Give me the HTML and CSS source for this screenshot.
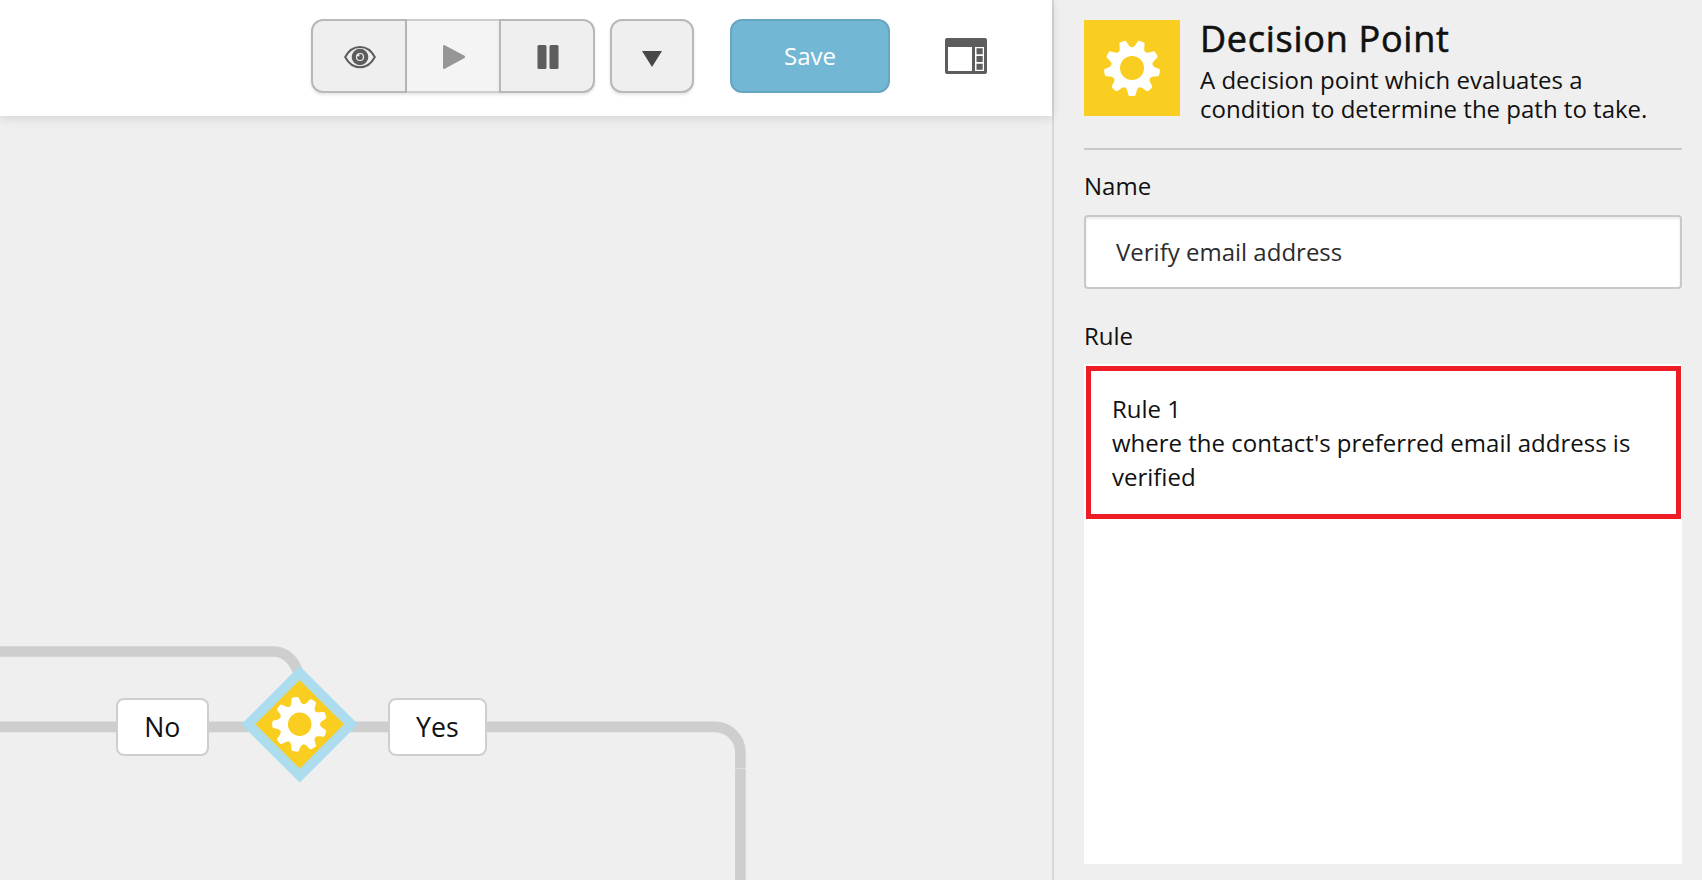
FILE: index.html
```html
<!DOCTYPE html>
<html lang="en">
<head>
<meta charset="utf-8">
<title>Decision Point</title>
<link rel="stylesheet" href="styles.css">
</head>
<body>
<svg class="defs" width="0" height="0">
  <defs>
    <path id="tooth" d="M-7.200 -19.300 C-5.500 -20.300 -4.800 -22 -4.500 -23.500 L-3.800 -26.500 Q-3.400 -28 -2 -28 L2 -28 Q3.400 -28 3.800 -26.500 L4.500 -23.500 C4.800 -22 5.500 -20.300 7.200 -19.300 L6 -17 L-6 -17 Z"/>
    <g id="gear">
      <circle r="16.200" fill="none" stroke="#fff" stroke-width="8.400"/>
      <g fill="#fff">
        <use href="#tooth" transform="rotate(20)"/>
        <use href="#tooth" transform="rotate(60)"/>
        <use href="#tooth" transform="rotate(100)"/>
        <use href="#tooth" transform="rotate(140)"/>
        <use href="#tooth" transform="rotate(180)"/>
        <use href="#tooth" transform="rotate(220)"/>
        <use href="#tooth" transform="rotate(260)"/>
        <use href="#tooth" transform="rotate(300)"/>
        <use href="#tooth" transform="rotate(340)"/>
      </g>
    </g>
  </defs>
</svg>
<div class="app">
  <main class="workspace">
    <header class="toolbar">
      <div class="group">
        <button class="btn first" aria-label="Preview">
          <svg width="32" height="24" viewBox="0 0 32 24"><path d="M1.200 12C8-1.500 24-1.500 30.800 12C24 25.500 8 25.500 1.200 12Z" fill="none" stroke="#5d5d5d" stroke-width="2"/><circle cx="16" cy="12" r="8.300" fill="#5d5d5d"/><circle cx="16" cy="12" r="3.500" fill="none" stroke="#efefef" stroke-width="1.200"/><circle cx="14.200" cy="10.200" r="1.200" fill="#efefef"/></svg>
        </button>
        <button class="btn middle" aria-label="Play">
          <svg width="24" height="26" viewBox="0 0 24 26"><path d="M1 2.500Q1 .3 2.800 1.200L22.500 11.800Q24 13 22.500 14L2.800 24.700Q1 25.500 1 23.500Z" fill="#969696"/></svg>
        </button>
        <button class="btn last" aria-label="Pause">
          <svg width="22" height="24" viewBox="0 0 22 24"><g fill="#5d5d5d"><rect x=".5" width="9" height="24" rx="1.500"/><rect x="12.500" width="9" height="24" rx="1.500"/></g></svg>
        </button>
      </div>
      <button class="btn more" aria-label="More">
        <svg width="20" height="16" viewBox="0 0 20 16"><path d="M0 0H20L10 16Z" fill="#484848"/></svg>
      </button>
      <button class="btn save">Save</button>
      <svg class="pane-icon" width="42" height="36" viewBox="0 0 42 36"><rect width="42" height="36" rx="2" fill="#5d5d5d"/><path d="M3 9H27V33H3ZM30 9H39V33H30Z" fill="#fff"/><path d="M31.500 10.300H37.700V16.300H31.500ZM31.500 18H37.700V24H31.500ZM31.500 25.700H37.700V31.700H31.500Z" fill="#5d5d5d"/></svg>
    </header>
    <section class="canvas">
      <svg class="wires" width="1052" height="764" viewBox="0 116 1052 764">
        <g fill="none" stroke="#cecece" stroke-width="10.700">
          <path d="M0 651.500H274.500Q293 653 299.700 677V724"/>
          <path d="M0 726.800H715A25.500 25.500 0 0 1 740.400 752V768"/>
          <path d="M740.400 768.600V880"/>
        </g>
        <path d="M299.700 666L358 724.300L299.700 782.600L241.400 724.300Z" fill="#abdcef"/>
        <path d="M299.700 676.800L347.200 724.300L299.700 771.800L252.200 724.300Z" fill="none" stroke="#c4dbb8" stroke-width=".7"/>
        <path d="M299.700 680L344 724.300L299.700 768.600L255.400 724.300Z" fill="#f9ce20"/>
        <use href="#gear" transform="translate(299.700 724.300) rotate(90) scale(.98)"/>
      </svg>
      <div class="label no">No</div>
      <div class="label yes">Yes</div>
    </section>
  </main>
  <aside class="panel">
    <div class="head">
      <div class="tile"><svg width="96" height="96" viewBox="-48 -48 96 96"><use href="#gear"/></svg></div>
      <div class="intro">
        <h1>Decision Point</h1>
        <p>A decision point which evaluates a condition to determine the path to take.</p>
      </div>
    </div>
    <label class="caption" for="name">Name</label>
    <input class="field" id="name" value="Verify email address">
    <div class="caption rule-caption">Rule</div>
    <div class="rules">
      <div class="rule">Rule 1<br>where the contact's preferred email address is verified</div>
    </div>
  </aside>
</div>
</body>
</html>
```
FILE: styles.css
```css
* { box-sizing: border-box; }
body {
  margin: 0;
  background: #efefef;
  color: #111;
  font: 24px/29px "Open Sans", "Noto Sans", sans-serif;
}
.defs { position: absolute; }
.app { display: flex; width: 1702px; height: 880px; overflow: hidden; }
.workspace { width: 1052px; display: flex; flex-direction: column; }
.toolbar {
  height: 116px;
  flex: none;
  display: flex;
  align-items: flex-start;
  padding: 19px 0 0 311px;
  background: #fff;
  box-shadow: 0 2px 10px rgba(0, 0, 0, .12);
  z-index: 1;
}
.group { display: flex; }
.btn {
  display: flex;
  align-items: center;
  justify-content: center;
  height: 74px;
  padding: 2px 0 0;
  border: 2px solid #b8b8b8;
  border-radius: 12px;
  background: #efefef;
  box-shadow: 0 2px 3px rgba(0, 0, 0, .1);
  font: inherit;
}
.first { width: 96px; padding-left: 1px; border-radius: 12px 0 0 12px; }
.middle { width: 92px; padding-left: 2px; border-radius: 0; border-width: 2px 0; border-color: #cecece; background: #f4f4f4; }
.last { width: 96px; padding-left: 1px; border-radius: 0 12px 12px 0; }
.more { width: 84px; margin-left: 15px; padding-top: 5px; }
.save {
  width: 160px;
  margin-left: 36px;
  padding: 0 0 2px;
  border-color: #67a6c0;
  background: #72b8d5;
  box-shadow: none;
  color: #fff;
}
.pane-icon { margin: 19px 0 0 55px; }
.canvas { position: relative; height: 764px; }
.wires { display: block; }
.label {
  position: absolute;
  top: 582.3px;
  height: 57.3px;
  border: 2.67px solid #cecece;
  border-radius: 8px;
  background: #fff;
  font-size: 26.67px;
  line-height: 54px;
  text-align: center;
}
.no { left: 116px; width: 92.7px; }
.yes { left: 388px; width: 98.7px; }
.panel {
  width: 650px;
  border-left: 2px solid #d7d7d7;
  padding: 20px 20px 0 30px;
}
.head { display: flex; gap: 20px; height: 130px; border-bottom: 2px solid #cacaca; }
.tile { width: 96px; height: 96px; background: #f9ce20; }
.tile svg { display: block; }
.intro { width: 460px; }
h1 {
  margin: 0;
  font-size: 36px;
  font-weight: 400;
  line-height: 38px;
  letter-spacing: .73px;
  -webkit-text-stroke: .6px #111;
}
p { margin: 7px 0 0; }
.caption { display: block; margin-top: 21px; }
.field {
  display: block;
  width: 598px;
  height: 74px;
  margin-top: 15px;
  padding: 0 30px 2px;
  border: 2px solid #c8c8c8;
  border-radius: 4px;
  background: #fff;
  box-shadow: inset 0 2px 3px rgba(0, 0, 0, .08);
  color: #2c2c2c;
  font: inherit;
}
.rule-caption { margin-top: 32px; }
.rules { height: 500px; margin-top: 14px; padding: 2px 1px 0 2px; background: #fff; }
.rule { height: 153px; padding: 21px; border: 5px solid #ee1c25; line-height: 34px; }
```
